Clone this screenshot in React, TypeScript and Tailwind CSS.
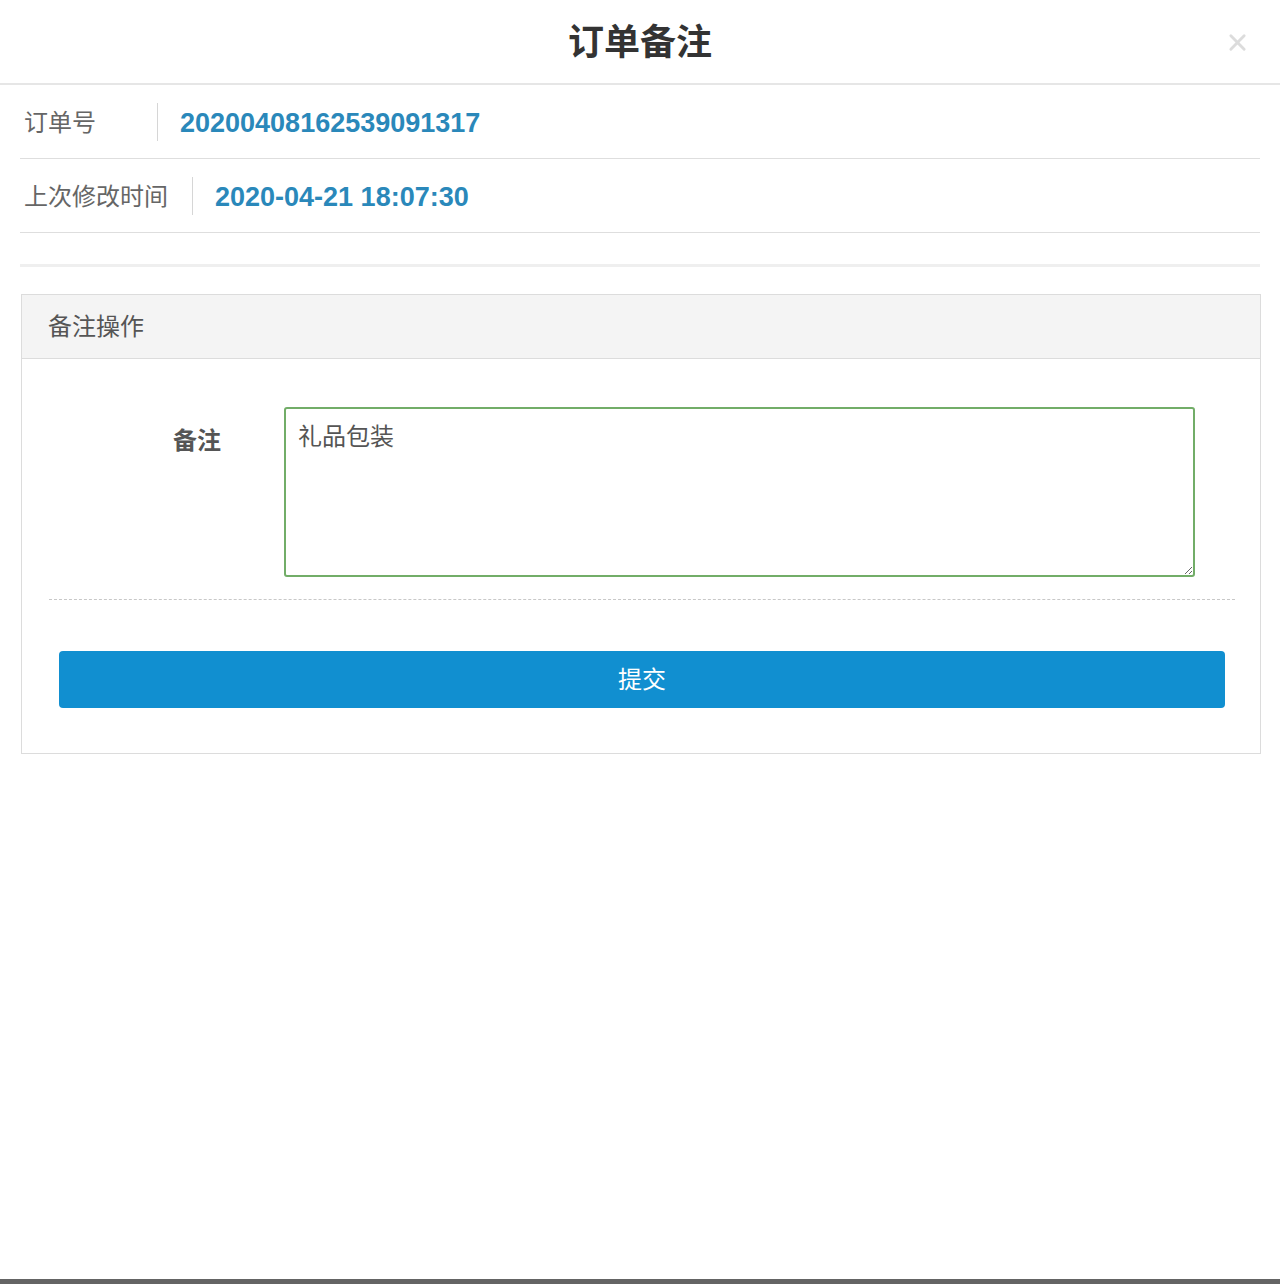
const font = "font-['Liberation_Sans','Noto_Sans_CJK_SC',sans-serif]";

const InfoRow = ({ label, value }: { label: string; value: string }) => {
  return (
    <div className="flex h-[74px] items-center border-b border-[#dedede] pl-[4px]">
      <div className="min-w-[133px] pr-[24px] pt-[2px] text-[24px] text-[#666]">{label}</div>
      <div className="h-[38px] w-px bg-[#d6d6d6]" />
      <div className="pl-[22px] pt-[4px] text-[27px] font-bold text-[#2a88ba]">{value}</div>
    </div>
  );
};

const App = () => {
  return (
    <div className={`flex min-h-[1284px] flex-col bg-white ${font}`}>
      {/* Header */}
      <div className="relative flex h-[85px] items-center justify-center border-b-2 border-[#e6e6e6]">
        <h1 className="pt-[3px] text-[36px] font-bold text-[#333]">订单备注</h1>
        <button className="absolute right-[33px] top-[33px] h-[19px] w-[19px]">
          <svg viewBox="0 0 20 20" className="h-full w-full" stroke="#dcdcdc" strokeWidth="3" strokeLinecap="round">
            <path d="M3 3 L17 17 M17 3 L3 17" />
          </svg>
        </button>
      </div>

      <div className="px-[20px]">
        <InfoRow label="订单号" value="20200408162539091317" />
        <InfoRow label="上次修改时间" value="2020-04-21 18:07:30" />
        <div className="mt-[31px] h-[3px] bg-[#efefef]" />

        {/* Remark panel */}
        <div className="mt-[27px] ml-px -mr-px border border-[#dcdcdc]">
          <div className="flex h-[64px] items-center border-b border-[#dcdcdc] bg-[#f4f4f4] pl-[26px] text-[24px] text-[#555]">
            备注操作
          </div>
          <div className="pl-[27px] pr-[25px] pt-[48px] pb-[45px]">
            <div className="flex">
              <label className="w-[172px] pt-[16px] text-right text-[24px] font-bold text-[#555]">备注</label>
              <textarea
                defaultValue="礼品包装"
                className="ml-[63px] h-[170px] w-[911px] rounded-[3px] border-2 border-[#72ad68] px-[12px] py-[12px] text-[24px] leading-[32px] text-[#555] outline-none"
              />
            </div>
            <div className="mt-[22px] border-t border-dashed border-[#c8c8c8]" />
            <div className="px-[10px] pt-[51px]">
              <button className="flex h-[57px] w-full items-center justify-center rounded-[4px] bg-[#118fd0] text-[24px] text-white">
                提交
              </button>
            </div>
          </div>
        </div>
      </div>

      <div className="flex-1" />
      <div className="h-[5px] bg-[#646464]" />
    </div>
  );
};

export default App;
